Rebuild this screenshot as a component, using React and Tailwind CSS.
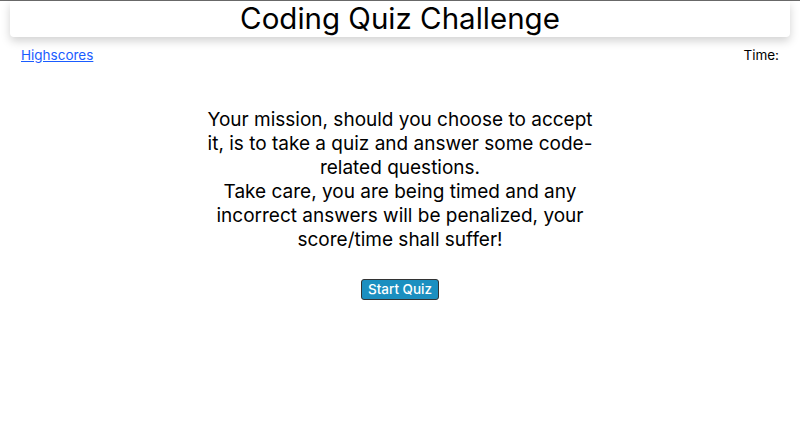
export default function App() {
  return (
    <div className="min-h-[432px] bg-white border-t border-[#6b6b6b] text-black" style={{ fontFamily: "Inter, 'Noto Sans', sans-serif" }}>
      <header className="mx-[10px] h-[36px] rounded-b-[4px] bg-white shadow-[0_4px_10px_rgba(0,0,0,0.18)] flex items-center justify-center">
        <h1 className="text-[29.5px] leading-none font-normal">Coding Quiz Challenge</h1>
      </header>
      <nav className="flex justify-between items-center px-[21px] mt-[9px] text-[13.5px] leading-[18px]">
        <a href="#" className="text-[#1a5cff] underline">Highscores</a>
        <span>Time:</span>
      </nav>
      <main className="flex flex-col items-center mt-[44px]">
        <p className="w-[390px] text-center text-[19px] leading-[24px]">
          Your mission, should you choose to accept it, is to take a quiz and answer some code-related questions.
          <br />
          Take care, you are being timed and any incorrect answers will be penalized, your score/time shall suffer!
        </p>
        <button className="mt-[27px] h-[21px] px-[6px] rounded-[3px] border border-[#333] bg-[#1b8fc0] text-white text-[13.5px] font-medium leading-none">
          Start Quiz
        </button>
      </main>
    </div>
  );
}
